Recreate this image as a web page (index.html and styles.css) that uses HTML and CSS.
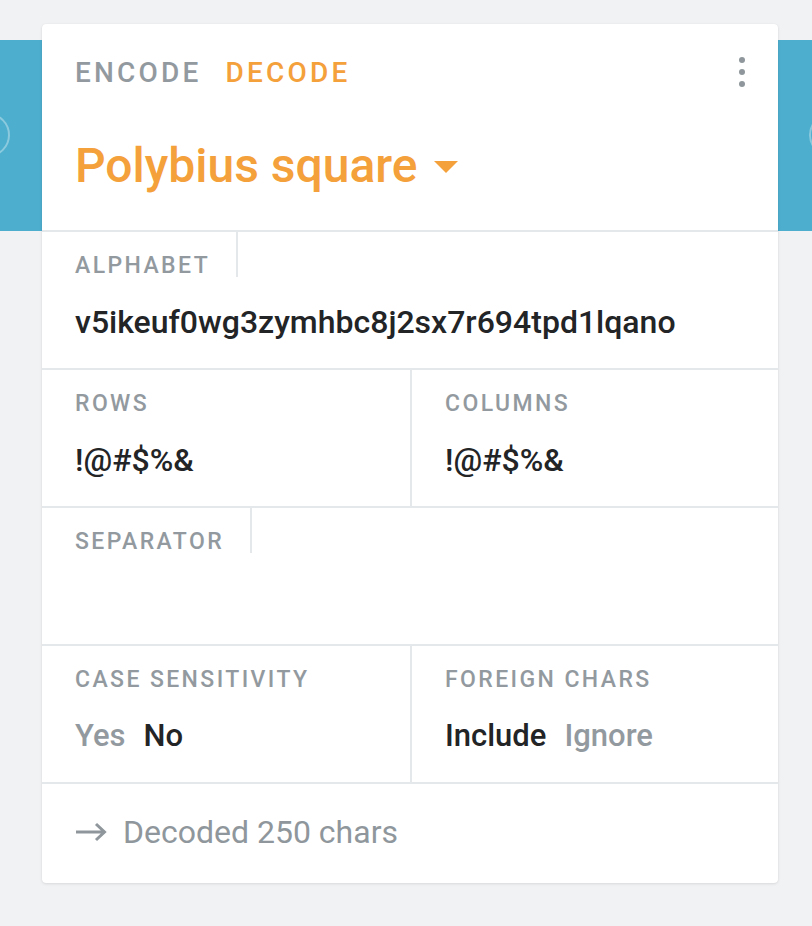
FILE: index.html
```html
<!DOCTYPE html>
<html>
<head>
<meta charset="utf-8">
<link rel="stylesheet" href="styles.css">
</head>
<body>
<div class="stage">
  <div class="band">
    <span class="ring ring-left"></span>
    <span class="ring ring-right"></span>
  </div>
  <div class="card">
    <div class="head">
      <div class="tabs">
        <span class="tab">ENCODE</span>
        <span class="tab tab-active">DECODE</span>
        <span class="menu"><i></i><i></i><i></i></span>
      </div>
      <div class="title">
        <span>Polybius square</span>
        <span class="caret"></span>
      </div>
    </div>

    <div class="field">
      <span class="label label-lined">ALPHABET</span>
      <div class="value">v5ikeuf0wg3zymhbc8j2sx7r694tpd1lqano</div>
    </div>

    <div class="row">
      <div class="field cell">
        <span class="label">ROWS</span>
        <div class="value">!@#$%&amp;</div>
      </div>
      <div class="field cell">
        <span class="label">COLUMNS</span>
        <div class="value">!@#$%&amp;</div>
      </div>
    </div>

    <div class="field">
      <span class="label label-lined label-sep">SEPARATOR</span>
      <div class="value"></div>
    </div>

    <div class="row">
      <div class="field cell">
        <span class="label">CASE SENSITIVITY</span>
        <div class="options">
          <span class="opt">Yes</span>
          <span class="opt opt-on">No</span>
        </div>
      </div>
      <div class="field cell">
        <span class="label">FOREIGN CHARS</span>
        <div class="options">
          <span class="opt opt-on">Include</span>
          <span class="opt">Ignore</span>
        </div>
      </div>
    </div>

    <div class="foot">
      <svg class="arrow" width="32" height="20" viewBox="0 0 32 20">
        <path d="M1 10 H29.5 M21 2 L29.5 10 L21 18" fill="none" stroke="#8f979c" stroke-width="3"/>
      </svg>
      <span>Decoded 250 chars</span>
    </div>
  </div>
</div>
</body>
</html>
```

FILE: styles.css
```css
* { box-sizing: border-box; }
html, body {
  margin: 0;
  padding: 0;
  background: #f1f2f4;
  font-family: Roboto, "Liberation Sans", sans-serif;
}
.stage {
  position: relative;
  width: 812px;
  height: 926px;
  overflow: hidden;
  padding-top: 24px;
}
.band {
  position: absolute;
  top: 40px;
  left: 0;
  right: 0;
  height: 191px;
  background: #4daecd;
}
.ring {
  position: absolute;
  top: 73px;
  width: 44px;
  height: 44px;
  border-radius: 50%;
  border: 2px solid rgba(255,255,255,0.35);
}
.ring-left { left: -34px; }
.ring-right { left: 809px; }

.card {
  position: relative;
  width: 736px;
  margin-left: 42px;
  background: #fff;
  border-radius: 4px;
  box-shadow: 0 1px 3px rgba(0,0,0,0.10), 0 0 1px rgba(0,0,0,0.08);
}
.head {
  height: 208px;
  padding: 33px 33px 0 33px;
  border-bottom: 2px solid #e4e8eb;
}
.tabs {
  display: flex;
  align-items: center;
  height: 32px;
  line-height: 32px;
}
.tab {
  font-size: 28px;
  font-weight: 500;
  letter-spacing: 3.2px;
  color: #939a9f;
  margin-right: 24px;
}
.tab-active { color: #f4a03b; }
.menu {
  margin-left: auto;
  margin-right: 0;
  margin-top: -2px;
  display: flex;
  flex-direction: column;
  align-items: center;
  gap: 6px;
  width: 6px;
}
.menu i {
  display: block;
  width: 6px;
  height: 6px;
  border-radius: 50%;
  background: #8f979c;
}
.title {
  margin-top: 51px;
  display: flex;
  align-items: center;
  font-size: 48px;
  line-height: 52px;
  font-weight: 500;
  color: #f4a03b;
}
.caret {
  width: 0;
  height: 0;
  margin-left: 16px;
  margin-top: 2px;
  border-left: 12px solid transparent;
  border-right: 12px solid transparent;
  border-top: 12px solid #f4a03b;
}

.row {
  display: flex;
  border-bottom: 2px solid #e4e8eb;
}
.field {
  height: 138px;
  padding-left: 33px;
  border-bottom: 2px solid #e4e8eb;
}
.row .field { border-bottom: none; height: 136px; }
.cell { flex: 0 0 368px; }
.cell + .cell {
  flex: 1;
  border-left: 2px solid #e4e8eb;
}
.label {
  display: inline-block;
  padding-top: 23px;
  line-height: 22px;
  height: 45px;
  font-size: 23px;
  font-weight: 500;
  letter-spacing: 2.4px;
  color: #939a9f;
}
.label-lined {
  padding-right: 26px;
  border-right: 2px solid #e4e8eb;
}
.value {
  margin-top: 27px;
  height: 36px;
  font-size: 32px;
  line-height: 36px;
  font-weight: 500;
  color: #222426;
}
.options {
  margin-top: 27px;
  display: flex;
  gap: 18px;
  font-size: 31px;
  line-height: 36px;
  font-weight: 500;
  color: #939a9f;
}
.opt-on { color: #222426; }

.foot {
  height: 99px;
  padding: 30px 33px 0 33px;
  display: flex;
  align-items: flex-start;
  font-size: 32px;
  line-height: 36px;
  color: #8f979c;
}
.arrow {
  margin-top: 8px;
  margin-right: 16px;
}
```
